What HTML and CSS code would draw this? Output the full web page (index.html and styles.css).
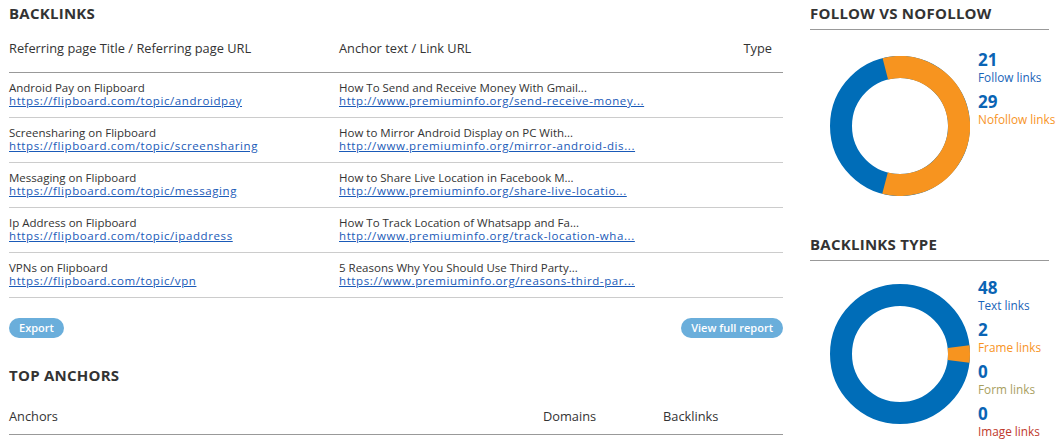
FILE: index.html
```html
<!DOCTYPE html>
<html>
<head>
<meta charset="utf-8">
<link rel="stylesheet" href="styles.css">
</head>
<body>
<div class="page">
  <div class="main">
    <h2 class="title">BACKLINKS</h2>
    <div class="thead">
      <div class="c1">Referring page Title / Referring page URL</div>
      <div class="c2">Anchor text / Link URL</div>
      <div class="c3">Type</div>
    </div>
    <div class="row">
      <div class="c1"><div class="t">Android Pay on Flipboard</div><a class="u" href="#">https://flipboard.com/topic/androidpay</a></div>
      <div class="c2"><div class="t">How To Send and Receive Money With Gmail...</div><a class="u" href="#">http://www.premiuminfo.org/send-receive-money...</a></div>
      <div class="c3"></div>
    </div>
    <div class="row">
      <div class="c1"><div class="t">Screensharing on Flipboard</div><a class="u" href="#">https://flipboard.com/topic/screensharing</a></div>
      <div class="c2"><div class="t">How to Mirror Android Display on PC With...</div><a class="u" href="#">http://www.premiuminfo.org/mirror-android-dis...</a></div>
      <div class="c3"></div>
    </div>
    <div class="row">
      <div class="c1"><div class="t">Messaging on Flipboard</div><a class="u" href="#">https://flipboard.com/topic/messaging</a></div>
      <div class="c2"><div class="t">How to Share Live Location in Facebook M...</div><a class="u" href="#">http://www.premiuminfo.org/share-live-locatio...</a></div>
      <div class="c3"></div>
    </div>
    <div class="row">
      <div class="c1"><div class="t">Ip Address on Flipboard</div><a class="u" href="#">https://flipboard.com/topic/ipaddress</a></div>
      <div class="c2"><div class="t">How To Track Location of Whatsapp and Fa...</div><a class="u" href="#">http://www.premiuminfo.org/track-location-wha...</a></div>
      <div class="c3"></div>
    </div>
    <div class="row">
      <div class="c1"><div class="t">VPNs on Flipboard</div><a class="u" href="#">https://flipboard.com/topic/vpn</a></div>
      <div class="c2"><div class="t">5 Reasons Why You Should Use Third Party...</div><a class="u" href="#">https://www.premiuminfo.org/reasons-third-par...</a></div>
      <div class="c3"></div>
    </div>
    <div class="actions">
      <button class="btn">Export</button>
      <button class="btn">View full report</button>
    </div>
    <h2 class="title title2">TOP ANCHORS</h2>
    <div class="ahead">
      <div class="a1">Anchors</div>
      <div class="a2">Domains</div>
      <div class="a3">Backlinks</div>
    </div>
  </div>
  <div class="side">
    <h2 class="stitle">FOLLOW VS NOFOLLOW</h2>
    <div class="chart">
      <svg class="donut" width="140" height="140" viewBox="0 0 140 140">
        <circle cx="70" cy="70" r="59" fill="none" stroke="#006db8" stroke-width="22"/>
        <circle cx="70" cy="70" r="59" fill="none" stroke="#f7941f" stroke-width="22" stroke-dasharray="215.01 370.71" transform="rotate(-104.4 70 70)"/>
      </svg>
      <div class="legend">
        <div class="item"><div class="num">21</div><div class="lbl blue">Follow links</div></div>
        <div class="item"><div class="num">29</div><div class="lbl orange">Nofollow links</div></div>
      </div>
    </div>
    <h2 class="stitle stitle2">BACKLINKS TYPE</h2>
    <div class="chart chart2">
      <svg class="donut" width="140" height="140" viewBox="0 0 140 140">
        <circle cx="70" cy="70" r="59" fill="none" stroke="#006db8" stroke-width="22"/>
        <circle cx="70" cy="70" r="59" fill="none" stroke="#f7941f" stroke-width="22" stroke-dasharray="14.83 370.71" transform="rotate(-7.2 70 70)"/>
      </svg>
      <div class="legend legend2">
        <div class="item"><div class="num">48</div><div class="lbl blue">Text links</div></div>
        <div class="item"><div class="num">2</div><div class="lbl orange">Frame links</div></div>
        <div class="item"><div class="num">0</div><div class="lbl olive">Form links</div></div>
        <div class="item"><div class="num">0</div><div class="lbl red">Image links</div></div>
      </div>
    </div>
  </div>
</div>
</body>
</html>
```

FILE: styles.css
```css
* { box-sizing: border-box; }
html, body { margin: 0; padding: 0; background: #fff; }
body {
  font-family: "Open Sans", "Noto Sans", sans-serif;
  color: #333;
  overflow: hidden;
}
.page {
  display: flex;
  width: 1057px;
  height: 439px;
}
.main {
  width: 783px;
  padding-left: 9px;
  flex: none;
}
.title {
  margin: 0;
  height: 28px;
  line-height: 27px;
  font-size: 15px;
  letter-spacing: 0.25px;
  font-weight: 700;
  color: #333;
}
.thead, .row {
  display: flex;
  font-size: 12px;
}
.thead {
  height: 45px;
  border-bottom: 1px solid #999;
  align-items: center;
  padding-bottom: 4px;
  font-size: 12.8px;
}
.c1 { width: 330px; flex: none; }
.c2 { flex: 1; }
.c3 { width: 60px; text-align: right; padding-right: 11px; }
.row {
  height: 45px;
  border-bottom: 1px solid #ccc;
  padding-top: 8px;
  line-height: 13px;
  font-size: 11.5px;
}
.t { color: #333; }
.u { color: #1a5ab8; text-decoration: underline; letter-spacing: 0.6px; }
.actions {
  display: flex;
  justify-content: space-between;
  margin-top: 20px;
}
.btn {
  height: 20px;
  border: none;
  border-radius: 10px;
  background: #6aaedb;
  color: #fff;
  font-family: inherit;
  font-size: 11px;
  font-weight: 600;
  padding: 0 10px;
  line-height: 20px;
}
.title2 { margin-top: 24px; }
.ahead {
  display: flex;
  height: 45px;
  align-items: center;
  border-bottom: 1px solid #999;
  padding-top: 8px;
  font-size: 12.8px;
}
.a1 { width: 534px; }
.a2 { width: 120px; }
.a3 { flex: 1; }
.side {
  margin-left: 27px;
  width: 239px;
  flex: none;
}
.stitle {
  margin: 0;
  height: 30px;
  line-height: 27px;
  font-size: 15px;
  letter-spacing: 0.25px;
  font-weight: 700;
  border-bottom: 1px solid #999;
}
.stitle2 { margin-top: 35px; }
.chart {
  display: flex;
  align-items: flex-start;
  padding-top: 20px;
}
.donut {
  display: block;
  margin-left: 20px;
  margin-top: 6px;
  flex: none;
}
.chart2 { padding-top: 17px; }
.chart2 .donut { margin-top: 6px; }
.legend { margin-left: 8px; white-space: nowrap; }
.item { margin-bottom: 8px; }
.num {
  font-size: 17px;
  font-weight: 700;
  color: #0a64b4;
  line-height: 20px;
}
.lbl { font-size: 11.8px; line-height: 14px; }
.blue { color: #1a64b8; }
.orange { color: #f7941f; }
.olive { color: #a8a060; }
.red { color: #c0392b; }
```
